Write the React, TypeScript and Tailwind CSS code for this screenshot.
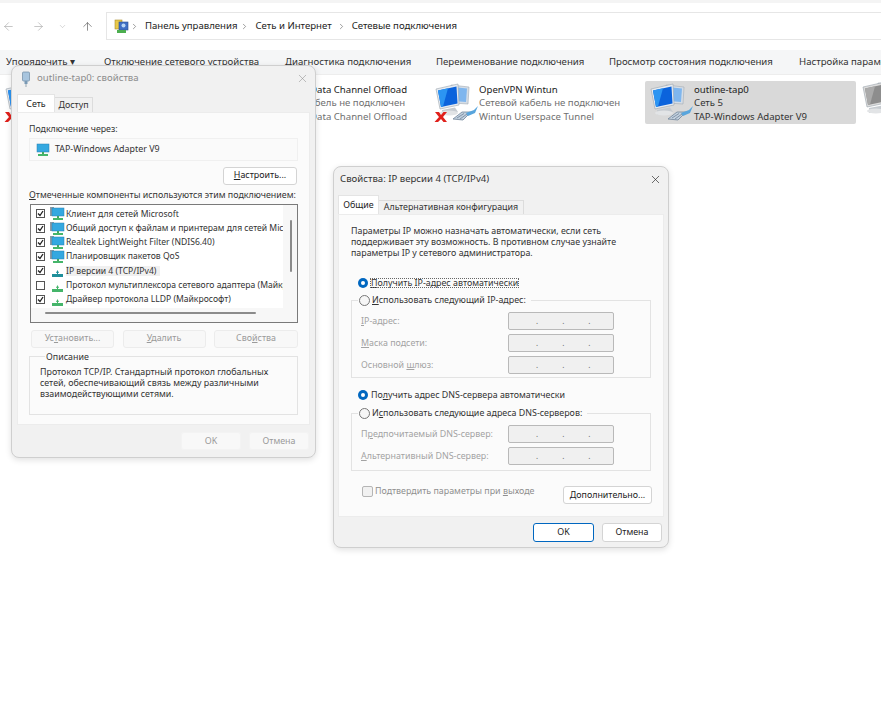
import React from "react";
import { ArrowLeft, ArrowRight, ArrowUp, ChevronDown, ChevronRight, X } from "lucide-react";

const FONT = { fontFamily: '"Noto Sans", "Open Sans", sans-serif' };

// Two monitors and a cable plug, the classic network adapter icon
const AdapterIcon = ({ failed, gray }: { failed?: boolean; gray?: boolean }) => (
  <svg width="46" height="40" viewBox="0 0 46 40" className="shrink-0">
    <path d="M17 2 L35 4 L34 21 L18 20 Z" fill={gray ? "#cfcfcf" : "#d5dde6"} stroke="#a3abb3" strokeWidth="0.6" />
    <path d="M19 4 L33 5.500 L32 19 L20 18 Z" fill={gray ? "#a4a4a4" : "#7fb6ee"} />
    <path d="M2 6 L24 1 L25 22 L6 26 Z" fill={gray ? "#dcdcdc" : "#e6ebf1"} stroke="#9ba4ad" strokeWidth="0.6" />
    <path d="M4 7.500 L22.500 3.500 L23.500 20.500 L7 24 Z" fill={gray ? "#8d8d8d" : "#0b63dc"} />
    <path d="M4 7.500 L14 5.300 L9 23.500 L7 24 Z" fill={gray ? "#aaaaaa" : "#2c95f2"} />
    <path d="M8 27 L21 24.500 L24 29 L8 32 Z" fill="#c6cbd0" />
    <ellipse cx="15" cy="30" rx="9" ry="2.500" fill="#e2e4e6" />
    {!gray && (
      <>
        <path d="M19 36 L28 29 L37 29 L29 37 Z" fill="#c2d0de" stroke="#71859a" strokeWidth="0.8" />
        <path d="M32 30 L40 27 L44 23 L41 30 L34 33 Z" fill="#58a5dd" />
        <path d="M23 35 L30 30.500 M26 36 L33 31" stroke="#71859a" strokeWidth="0.8" />
      </>
    )}
    {failed && (
      <path d="M1 29 L5 29 L7 32 L9.500 29 L13 29 L9 34 L13 39 L9.500 39 L7 36 L4 39 L0.500 39 L5 34 Z" fill="#e0201b" />
    )}
  </svg>
);

const ControlPanelIcon = () => (
  <svg width="15" height="15" viewBox="0 0 15 15" className="shrink-0">
    <rect x="1" y="1" width="7" height="9" fill="#e9c94a" stroke="#a98d2b" strokeWidth="0.6" />
    <rect x="5" y="3" width="9" height="8" fill="#3f6fc4" stroke="#2b4f8f" strokeWidth="0.6" />
    <circle cx="9.500" cy="6.500" r="2" fill="#b8d6f5" />
    <rect x="3" y="11" width="9" height="3" fill="#4cae4f" />
  </svg>
);

const SmallMonitor = ({ small }: { small?: boolean }) => (
  <svg width="15" height="13" viewBox="0 0 15 13" className="shrink-0">
    {small ? null : <rect x="0" y="0" width="4" height="9" fill="#8d9aa5" />}
    <rect x="2" y="1" width="12" height="8" fill="#34a8e0" stroke="#2b7fb0" strokeWidth="0.5" />
    <rect x="7" y="9" width="2" height="2" fill="#45a860" />
    <rect x="3" y="11" width="10" height="2" fill="#45b56a" />
  </svg>
);

const ProtocolIcon = ({ teal }: { teal?: boolean }) => (
  <svg width="15" height="13" viewBox="0 0 15 13" className="shrink-0">
    <path d="M7.500 6 L9 9 L6 9 Z" fill={teal ? "#1f8f9a" : "#45b56a"} />
    <rect x="7" y="7" width="1" height="3" fill={teal ? "#1f8f9a" : "#45b56a"} />
    <rect x="2" y="10" width="11" height="3" fill={teal ? "#1f8f9a" : "#45b56a"} />
  </svg>
);

const Check = ({ checked }: { checked: boolean }) => (
  <span className="w-[9px] h-[9px] border border-[#555] bg-white shrink-0 flex items-center justify-center">
    {checked && (
      <svg width="7" height="7" viewBox="0 0 7 7">
        <path d="M1 3.500 L3 5.500 L6 1" fill="none" stroke="#222" strokeWidth="1.300" />
      </svg>
    )}
  </span>
);

const Radio = ({ on }: { on?: boolean }) =>
  on ? (
    <span className="w-[10px] h-[10px] rounded-full bg-[#0067c0] shrink-0 flex items-center justify-center">
      <span className="w-[4px] h-[4px] rounded-full bg-white" />
    </span>
  ) : (
    <span className="w-[11px] h-[11px] rounded-full border border-[#777] bg-[#f6f6f6] shrink-0" />
  );

const Btn = ({ className, children }: { className: string; children: React.ReactNode }) => (
  <div className={`flex items-center justify-center rounded-[3px] border text-[8.900px] leading-none ${className}`}>
    {children}
  </div>
);

const IpField = () => (
  <div className="w-[106px] h-[18px] rounded-[2px] border border-[#b9b9b9] bg-[#f0f0f0] flex items-center pl-[27px] gap-[24px] text-[8px] leading-none text-[#666]">
    <span>.</span>
    <span>.</span>
    <span>.</span>
  </div>
);

const IpRow = ({ label, className }: { label: React.ReactNode; className: string }) => (
  <div className={`flex items-center justify-between pl-[9px] pr-[36px] text-[8.900px] leading-none text-[#a3a3a3] whitespace-nowrap ${className}`}>
    <span>{label}</span>
    <IpField />
  </div>
);

const components = [
  { label: "Клиент для сетей Microsoft", checked: true, icon: "monitor" },
  { label: "Общий доступ к файлам и принтерам для сетей Microsoft", checked: true, icon: "monitor" },
  { label: "Realtek LightWeight Filter (NDIS6.40)", checked: true, icon: "monitor" },
  { label: "Планировщик пакетов QoS", checked: true, icon: "monitor" },
  { label: "IP версии 4 (TCP/IPv4)", checked: true, icon: "teal", selected: true },
  { label: "Протокол мультиплексора сетевого адаптера (Майкрософт)", checked: false, icon: "proto" },
  { label: "Драйвер протокола LLDP (Майкрософт)", checked: true, icon: "proto" },
];

const OutlineDialog = () => (
  <div className="absolute left-[11px] top-[65px] w-[305px] h-[393px] rounded-[8px] border border-[#cfcfcf] bg-[#f1f1f1] shadow-[0_2px_6px_rgba(0,0,0,0.12)] flex flex-col overflow-hidden">
    <div className="h-[25px] mb-[4px] shrink-0 flex items-center pl-[9px] pr-[6px] text-[9.600px] text-[#8c8c8c]">
      <svg width="10" height="16" viewBox="0 0 10 16" className="shrink-0">
        <rect x="1.500" y="1" width="7" height="9" rx="1" fill="#a8c5de" stroke="#6e8ba3" strokeWidth="0.7" />
        <rect x="3.500" y="10" width="3" height="3" fill="#7a9ab5" />
        <rect x="4.500" y="13" width="1" height="3" fill="#9aa7b2" />
      </svg>
      <span className="ml-[6px] flex-1">outline-tap0: свойства</span>
      <X size={13} strokeWidth={1} className="text-[#8c8c8c]" />
    </div>
    <div className="h-[17px] shrink-0 flex items-end pl-[5px] text-[8.900px] leading-none">
      <div className="w-[38px] h-[18px] pt-[1px] bg-white border border-b-0 border-[#e4e4e4] flex items-center justify-center text-[#222]">Сеть</div>
      <div className="w-[38px] h-[15px] pt-[1px] bg-[#f1f1f1] border border-b-0 border-l-0 border-[#dcdcdc] flex items-center justify-center text-[#333]">Доступ</div>
    </div>
    <div className="mx-[5px] h-[313px] shrink-0 bg-[#fbfbfb] border border-[#ececec] px-[11px] text-[8.800px] leading-none text-[#333]">
      <div className="mt-[12px]">Подключение через:</div>
      <div className="mt-[4px] h-[23px] border border-[#f0f0f0] bg-[#fafafa] flex items-center pl-[5px] gap-[5px] text-[8.900px]">
        <SmallMonitor small />
        <span>TAP-Windows Adapter V9</span>
      </div>
      <div className="mt-[6px] flex justify-end pr-[1px]">
        <Btn className="w-[74px] h-[18px] border-[#d4d4d4] bg-white text-[#222]">
          <span><u>Н</u>астроить...</span>
        </Btn>
      </div>
      <div className="mt-[4px] whitespace-nowrap text-[8.900px] leading-[12px]">
        <u>О</u>тмеченные компоненты используются этим подключением:
      </div>
      <div className="mt-[3px] ml-[1px] w-[268px] h-[119px] border border-[#7a7a7a] bg-[#f7f7f7] relative overflow-hidden">
        <div className="w-[252px] h-[103px] bg-white pt-[2px] overflow-hidden">
          {components.map((c) => (
            <div key={c.label} className="h-[14.250px] flex items-center pl-[5px] whitespace-nowrap text-[8.600px] leading-none text-[#333]">
              <Check checked={c.checked} />
              <span className="ml-[5px] mr-[1px] flex">
                {c.icon === "monitor" ? <SmallMonitor /> : <ProtocolIcon teal={c.icon === "teal"} />}
              </span>
              <span className={c.selected ? "bg-[#f0f0f0] pr-[4px] py-[1px]" : ""}>{c.label}</span>
            </div>
          ))}
        </div>
        <div className="absolute left-[259px] top-[15px] w-[2px] h-[52px] bg-[#8b8b8b] rounded-full" />
        <div className="absolute left-[14px] top-[107px] w-[211px] h-[2px] bg-[#8b8b8b] rounded-full" />
      </div>
      <div className="mt-[7px] ml-[2px] w-[267px] flex justify-between">
        <Btn className="w-[83px] h-[18px] border-[#ececec] bg-[#f8f8f8] text-[#9a9a9a]"><span>Ус<u>т</u>ановить...</span></Btn>
        <Btn className="w-[83px] h-[18px] border-[#ececec] bg-[#f8f8f8] text-[#9a9a9a]"><span><u>У</u>далить</span></Btn>
        <Btn className="w-[84px] h-[18px] border-[#ececec] bg-[#f8f8f8] text-[#9a9a9a]"><span>Сво<u>й</u>ства</span></Btn>
      </div>
      <fieldset className="mt-[3px] h-[64px] border border-[#e3e3e3] pl-[10px] pr-[6px]">
        <legend className="ml-[5px] px-[1px] text-[8.900px] leading-[12px] text-[#333]">Описание</legend>
        <p className="mt-[3px] text-[8.900px] leading-[11px] text-[#333]">
          Протокол TCP/IP. Стандартный протокол глобальных сетей, обеспечивающий связь между различными взаимодействующими сетями.
        </p>
      </fieldset>
    </div>
    <div className="mt-[7px] pr-[6px] flex justify-end gap-[8px]">
      <Btn className="w-[60px] h-[18px] border-[#f3f3f3] bg-[#f8f8f8] text-[#9a9a9a]">OK</Btn>
      <Btn className="w-[60px] h-[18px] border-[#f3f3f3] bg-[#f8f8f8] text-[#9a9a9a]">Отмена</Btn>
    </div>
  </div>
);

const IpDialog = () => (
  <div className="absolute left-[333px] top-[166px] w-[336px] h-[382px] rounded-[8px] border border-[#cfcfcf] bg-[#f1f1f1] shadow-[0_2px_6px_rgba(0,0,0,0.12)] flex flex-col overflow-hidden">
    <div className="h-[24px] mb-[4px] shrink-0 flex items-center pl-[6px] pr-[6px] text-[9.600px] text-[#333]">
      <span className="flex-1">Свойства: IP версии 4 (TCP/IPv4)</span>
      <X size={13} strokeWidth={1.200} className="text-[#222]" />
    </div>
    <div className="h-[19px] shrink-0 flex items-end pl-[4px] text-[8.900px] leading-none whitespace-nowrap">
      <div className="w-[41px] h-[19px] bg-white border border-b-0 border-[#e4e4e4] flex items-center justify-center text-[#222]">Общие</div>
      <div className="w-[145px] h-[14px] bg-[#f1f1f1] border border-b-0 border-l-0 border-[#dcdcdc] flex items-center justify-center text-[#333]">Альтернативная конфигурация</div>
    </div>
    <div className="mx-[4px] h-[303px] shrink-0 bg-[#fbfbfb] border border-[#ececec] px-[12px] text-[8.900px] leading-none text-[#333]">
      <p className="mt-[11px] text-[8.850px] leading-[11px] w-[295px]">
        Параметры IP можно назначать автоматически, если сеть поддерживает эту возможность. В противном случае узнайте параметры IP у сетевого администратора.
      </p>
      <div className="mt-[17px] h-[14px] pl-[7px] flex items-center gap-[3px]">
        <Radio on />
        <span className="outline-1 outline-dotted outline-[#666] whitespace-nowrap"><u>П</u>олучить IP-адрес автоматически</span>
      </div>
      <fieldset className="mt-[3px] h-[85px] border border-[#e3e3e3]">
        <legend className="ml-[6px] px-[1px] flex items-center gap-[2px] h-[14px]">
          <Radio />
          <span className="pr-[4px]"><u>И</u>спользовать следующий IP-адрес:</span>
        </legend>
        <IpRow className="mt-[5px]" label={<><u>I</u>P-адрес:</>} />
        <IpRow className="mt-[4px]" label={<><u>М</u>аска подсети:</>} />
        <IpRow className="mt-[4px]" label={<>Основной <u>ш</u>люз:</>} />
      </fieldset>
      <div className="mt-[10px] h-[14px] pl-[7px] flex items-center gap-[3px]">
        <Radio on />
        <span>По<u>л</u>учить адрес DNS-сервера автоматически</span>
      </div>
      <fieldset className="mt-[4px] h-[65px] border border-[#e3e3e3]">
        <legend className="ml-[6px] px-[1px] flex items-center gap-[2px] h-[14px]">
          <Radio />
          <span className="pr-[4px]">И<u>с</u>пользовать следующие адреса DNS-серверов:</span>
        </legend>
        <IpRow className="mt-[5px]" label={<>П<u>р</u>едпочитаемый DNS-сервер:</>} />
        <IpRow className="mt-[4px]" label={<><u>А</u>льтернативный DNS-сервер:</>} />
      </fieldset>
      <div className="mt-[15px] pl-[11px] flex items-start justify-between whitespace-nowrap">
        <div className="flex items-center gap-[2px] text-[#8f8f8f]">
          <span className="w-[11px] h-[11px] rounded-[2px] border border-[#b5b5b5] bg-[#f1f1f1]" />
          <span>Подтвердить параметры при <u>в</u>ыходе</span>
        </div>
        <Btn className="w-[89px] h-[18px] mr-[-1px] border-[#d4d4d4] bg-white text-[#222]">
          <span><u>Д</u>ополнительно...</span>
        </Btn>
      </div>
    </div>
    <div className="mt-[6px] pr-[6px] flex justify-end gap-[8px]">
      <Btn className="w-[61px] h-[19px] border-[#0067c0] bg-white text-[#222]">OK</Btn>
      <Btn className="w-[60px] h-[19px] border-[#d4d4d4] bg-white text-[#222]">Отмена</Btn>
    </div>
  </div>
);

const adapters = [
  { name: "OpenVPN TAP", status: "Сетевой кабель не подключен", device: "TAP-Windows Adapter V9", failed: true },
  { name: "OpenVPN Data Channel Offload", status: "Сетевой кабель не подключен", device: "OpenVPN Data Channel Offload", failed: true },
  { name: "OpenVPN Wintun", status: "Сетевой кабель не подключен", device: "Wintun Userspace Tunnel", failed: true },
  { name: "outline-tap0", status: "Сеть 5", device: "TAP-Windows Adapter V9", selected: true },
];

const toolbar = [
  { label: "Отключение сетевого устройства", width: "w-[181px]" },
  { label: "Диагностика подключения", width: "w-[151px]" },
  { label: "Переименование подключения", width: "w-[173px]" },
  { label: "Просмотр состояния подключения", width: "w-[190px]" },
  { label: "Настройка параметров подключения", width: "w-[200px]" },
];

export default function App() {
  return (
    <div className="relative w-[881px] h-[720px] bg-white overflow-hidden" style={FONT}>
      <div className="h-[3px] bg-[#f4f4f4]" />

      {/* Address bar */}
      <div className="h-[47px] flex items-start pt-[9px] text-[#8c8c8c]">
        <div className="w-[106px] h-[28px] flex items-center">
          <ArrowLeft size={13} strokeWidth={1.200} className="ml-[2px] text-[#a8a8a8]" />
          <ArrowRight size={13} strokeWidth={1.200} className="ml-[17px] text-[#a8a8a8]" />
          <ChevronDown size={9} strokeWidth={1.200} className="ml-[13px] text-[#a8a8a8]" />
          <ArrowUp size={13} strokeWidth={1.200} className="ml-[14px] text-[#555]" />
        </div>
        <div className="flex-1 h-[28px] border border-r-0 border-[#e6e6e6] bg-white flex items-center pl-[7px] text-[9.600px] text-[#222] whitespace-nowrap">
          <ControlPanelIcon />
          <ChevronRight size={9} strokeWidth={1.500} className="ml-[1px] text-[#555]" />
          <span className="ml-[6px]">Панель управления</span>
          <ChevronRight size={9} strokeWidth={1.500} className="ml-[3px] text-[#555]" />
          <span className="ml-[6px]">Сеть и Интернет</span>
          <ChevronRight size={9} strokeWidth={1.500} className="ml-[5px] text-[#555]" />
          <span className="ml-[6px]">Сетевые подключения</span>
        </div>
      </div>

      {/* Command bar */}
      <div className="h-[25px] bg-[#f5f6f7] border-b border-[#ededed] flex items-center pl-[6px] text-[9.650px] text-[#333] whitespace-nowrap overflow-hidden">
        <span className="w-[98px] shrink-0">Упорядочить ▾</span>
        {toolbar.map((t) => (
          <span key={t.label} className={`${t.width} shrink-0`}>{t.label}</span>
        ))}
      </div>

      {/* Connections */}
      <div className="mt-[6px] flex gap-[4px] text-[9.600px] leading-[13.500px] whitespace-nowrap">
        {adapters.map((a) => (
          <div key={a.device + a.name} className={`w-[211px] h-[43px] shrink-0 rounded-[2px] flex items-center pl-[4px] ${a.selected ? "bg-[#d9d9d9]" : ""}`}>
            <AdapterIcon failed={a.failed} />
            <div className="ml-[-1px] pt-[1px]">
              <div className="text-[#222]">{a.name}</div>
              <div className={a.selected ? "text-[#333]" : "text-[#707070]"}>{a.status}</div>
              <div className={a.selected ? "text-[#333]" : "text-[#707070]"}>{a.device}</div>
            </div>
          </div>
        ))}
        <div className="shrink-0 pl-[1px]">
          <AdapterIcon gray />
        </div>
      </div>

      <OutlineDialog />
      <IpDialog />
    </div>
  );
}
